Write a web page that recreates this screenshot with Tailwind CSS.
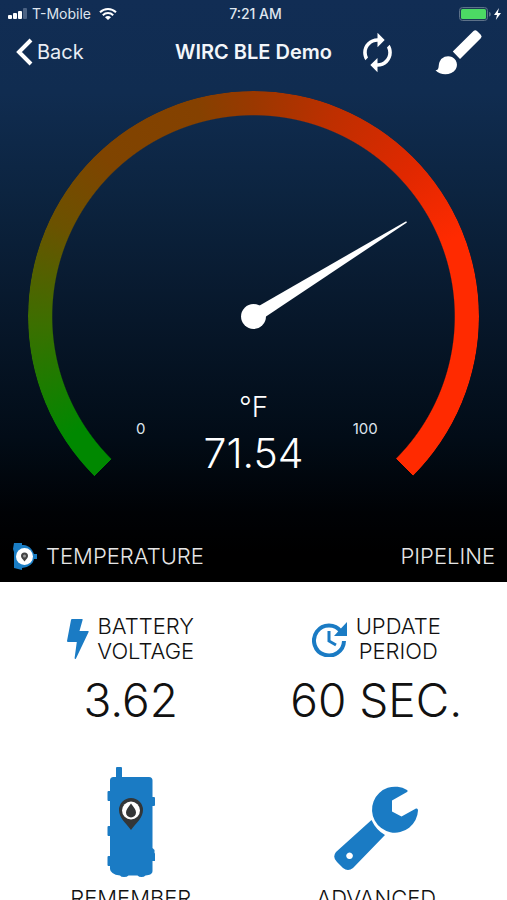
<!DOCTYPE html>
<html lang="en">
<head>
<meta charset="utf-8">
<meta name="viewport" content="width=device-width, initial-scale=1">
<title>WIRC BLE Demo</title>
<script src="https://cdn.jsdelivr.net/npm/@tailwindcss/browser@4"></script>
</head>
<body class="bg-white font-['Inter','Liberation_Sans',sans-serif] text-[#111]">
<main class="flex h-screen flex-col overflow-hidden">
  <section class="shrink-0 bg-[linear-gradient(to_bottom,#112d54_0%,#102c50_16%,#0c2440_33%,#07172a_55%,#020c17_75%,#000205_88%,#000_95%)] text-white">
    <!-- Status bar -->
    <div class="grid h-7 grid-cols-3 items-center pr-1 pl-2 text-sm text-[#dfe5ee]">
      <div class="flex items-center gap-1">
        <svg class="h-3 w-5" viewBox="0 0 20 12" aria-hidden="true">
          <rect x="0" y="7" width="4" height="4" rx="1" fill="#fff"/>
          <rect x="5" y="5" width="4" height="6" rx="1" fill="#fff"/>
          <rect x="10" y="3" width="4" height="8" rx="1" fill="#fff"/>
          <rect x="15" y="0" width="4" height="11" rx="1" fill="#4c6384"/>
        </svg>
        <span class="whitespace-nowrap">T-Mobile</span>
        <svg class="ml-1 h-3 w-[18px]" viewBox="0 0 18 12" fill="none" stroke="#fff" stroke-width="2" aria-hidden="true">
          <path d="M1 4.300a11.500 11.500 0 0 1 16 0M3.800 7.200a7.500 7.500 0 0 1 10.400 0"/>
          <path d="M9 12 6 9.200a4.200 4.200 0 0 1 6 0z" fill="#fff" stroke="none"/>
        </svg>
      </div>
      <span class="text-center font-medium">7:21 AM</span>
      <svg class="h-4 w-11 justify-self-end" viewBox="0 0 44 16" aria-hidden="true">
        <rect x="0.500" y="1.500" width="28" height="13" rx="3" fill="#1b3a55" stroke="#5d7189"/>
        <rect x="2" y="3" width="25" height="10" rx="1.500" fill="#4cd964"/>
        <path d="M30 6c2.500.5 2.500 4 0 4.500z" fill="#5d7189"/>
        <path d="M40 2 35 9h3l-1.200 5 5.200-7h-3.200z" fill="#fff"/>
      </svg>
    </div>
    <!-- Navigation bar -->
    <header class="grid h-12 grid-cols-[1fr_auto_1fr] items-center gap-2 pr-6 pl-4">
      <button type="button" class="flex items-center gap-1 text-xl text-[#e8edf5]">
        <svg class="h-7 w-[17px]" viewBox="0 0 17 28" fill="none" stroke="#fff" stroke-width="4" aria-hidden="true"><path d="M15 2 3 14l12 12"/></svg>
        Back
      </button>
      <h1 class="pl-2 text-xl font-semibold whitespace-nowrap text-[#f3f6fa]">WIRC BLE Demo</h1>
      <div class="flex items-center justify-between pl-4">
        <button type="button" aria-label="Refresh">
          <svg class="h-[43px] w-[43px]" viewBox="0 0 24 24" fill="#fff" aria-hidden="true"><path d="M12 6v3l4-4-4-4v3c-4.420 0-8 3.580-8 8 0 1.570.46 3.030 1.240 4.260L6.700 14.800A5.870 5.870 0 0 1 6 12c0-3.310 2.690-6 6-6zm6.760 1.740L17.300 9.200c.44.84.7 1.790.7 2.800 0 3.310-2.690 6-6 6v-3l-4 4 4 4v-3c4.420 0 8-3.580 8-8 0-1.570-.46-3.030-1.240-4.260z"/></svg>
        </button>
        <button type="button" aria-label="Theme">
          <svg class="h-[46px] w-[48px]" viewBox="0 0 48 46" fill="#fff" aria-hidden="true">
            <path d="M17.800 22.500 38.500 2Q40.300.3 42 2L45.800 5.800Q47.500 7.500 45.800 9.200L25 30z"/>
            <path d="M.5 41.300c4.200-.3 2.500-4.300 4-8.300a9.300 9.300 0 0 1 12.500-5c4.800 2.200 6.300 8 3.700 12.300-4 6.300-15.200 6.700-20.200 1z"/>
          </svg>
        </button>
      </div>
    </header>
    <!-- Gauge -->
    <div class="px-7 pt-[15px]">
      <div class="relative mx-auto aspect-square w-full max-w-[452px]">
        <div class="absolute inset-0 rounded-full bg-[conic-gradient(from_225deg,#008800_0deg,#008800_12deg,#3c6f00_43deg,#6b5200_70deg,#7f4400_92deg,#854100_120deg,#9a3800_135deg,#bd2f00_156deg,#e02800_182deg,#ff2a00_204deg,#ff2a00_270deg,transparent_270deg)] [mask-image:radial-gradient(closest-side,transparent_89%,#000_89.5%)]"></div>
        <svg class="relative block w-full" viewBox="0 0 452 452" role="img" aria-label="Temperature gauge, 71.54 °F">
          <circle cx="226" cy="226" r="12.500" fill="#fff"/>
          <path d="M222.500 220.500 379 130.500 379.800 131.700 229.500 232z" fill="#fff"/>
          <g fill="#fff" text-anchor="middle">
            <text x="113" y="344" font-size="15" fill="#dfe5ee">0</text>
            <text x="338" y="344" font-size="15" fill="#dfe5ee">100</text>
            <text x="226" y="327" font-size="28" font-weight="300">°F</text>
            <text x="226" y="378" font-size="41" font-weight="300">71.54</text>
          </g>
        </svg>
      </div>
    </div>
    <div class="flex items-center justify-between px-3 pb-3 text-[22px] leading-[27px] font-light text-[#e6e6e6]">
      <div class="flex items-center gap-2">
        <svg class="h-7 w-[26px]" viewBox="0 0 26 28" aria-hidden="true">
          <path d="M2 1h8v2c5 0 8 2 10 5l2 4h3v5h-3c-1 5-5 8-12 9v2l-8-2v-4H2V10L1 7z" fill="#1a7dc4"/>
          <circle cx="12.500" cy="14.500" r="8.500" fill="#fff"/>
          <path d="M12.500 19.500c-2-2.500-3.500-3.500-3.500-5.500a3.500 3.500 0 0 1 7 0c0 2-1.500 3-3.500 5.500z" fill="#444"/>
          <circle cx="12.500" cy="14" r="1.500" fill="#999"/>
        </svg>
        <h2>TEMPERATURE</h2>
      </div>
      <span>PIPELINE</span>
    </div>
  </section>

  <section class="grid shrink-0 grid-cols-2 px-2 pt-8 text-center text-[22px] leading-[25px] font-light">
    <div class="flex flex-col items-center">
      <div class="flex items-center gap-2">
        <svg class="h-[42px] w-[22px]" viewBox="0 0 22 42" fill="#1a7bc4" aria-hidden="true"><path d="M5 1h10q1 0 .6 1L12.500 13H21q1.200 0 .6 1L9 40.500q-1.200 1.200-1.400-.4L9.800 24H1Q0 24 0 23L4 2Q4.200 1 5 1z"/></svg>
        <h3>BATTERY<br>VOLTAGE</h3>
      </div>
      <p class="mt-2 text-[46px] leading-[56px]">3.62</p>
    </div>
    <div class="flex flex-col items-center">
      <div class="flex items-center gap-2">
        <svg class="h-[36px] w-[36px]" viewBox="0 0 36 36" aria-hidden="true">
          <path d="M29 10.500A15 15 0 1 0 32 20" fill="none" stroke="#1a7bc4" stroke-width="4"/>
          <path d="M35 1v14H22l5-5.500z" fill="#1a7bc4"/>
          <path d="M17 10v10l7 4" fill="none" stroke="#1a7bc4" stroke-width="3"/>
        </svg>
        <h3>UPDATE<br>PERIOD</h3>
      </div>
      <p class="mt-2 text-[46px] leading-[56px] whitespace-nowrap">60 SEC.</p>
    </div>
    <button type="button" class="mt-[38px] flex flex-col items-center gap-2">
      <svg class="h-[112px] w-12" viewBox="0 0 48 112" fill="#1a7bc4" aria-hidden="true">
        <path d="M9 2q0-1 1-1h4q1 0 1 1v9h27q3.500 0 3.500 3.500V31h1.500q1 0 1 1v7q0 1-1 1h-1.500v42l2 2v3l1 1v6q0 1-1 1h-2v10q0 3-4 4l-3 .5q-1.500 1.500-4 1.500t-4-1.500h-9q-1.500 1.500-4.500 1.500T13 109.500q-5-.5-7.500-2.500T3 103v-3H1.500q-1 0-1-1v-8q0-1 1-1H3V70H1.500q-1 0-1-1v-8q0-1 1-1H3V35H1.500q-1 0-1-1v-8q0-1 1-1H3V14.500Q3 11 6.500 11H9z"/>
        <path d="M24 64C19 57 12 52 12 44a12 12 0 0 1 24 0c0 8-7 13-12 20z" fill="#333638"/>
        <circle cx="24" cy="44.500" r="9" fill="#fff"/>
        <path d="M24 37.500c3 4 5 6 5 9a5 5 0 0 1-10 0c0-3 2-5 5-9z" fill="#333638"/>
      </svg>
      <span>REMEMBER</span>
    </button>
    <button type="button" class="mt-[38px] flex flex-col items-center gap-2">
      <svg class="h-[112px] w-[84px]" viewBox="0 0 84 112" fill="#1a7bc4" aria-hidden="true">
        <path d="M73 24A23 23 0 1 0 84 44.500q0-2.500-2-2L67.500 50.500 58 45.500V34.500L73 26q1.500-1 0-2z"/>
        <path fill-rule="evenodd" d="M37.500 54Q42 64 51 69L19 102Q14 106 9 102L3 96Q-2 91 2 86zM15.500 86.500a3.300 3.300 0 1 0 .1 0z"/>
      </svg>
      <span>ADVANCED</span>
    </button>
  </section>
</main>
</body>
</html>
